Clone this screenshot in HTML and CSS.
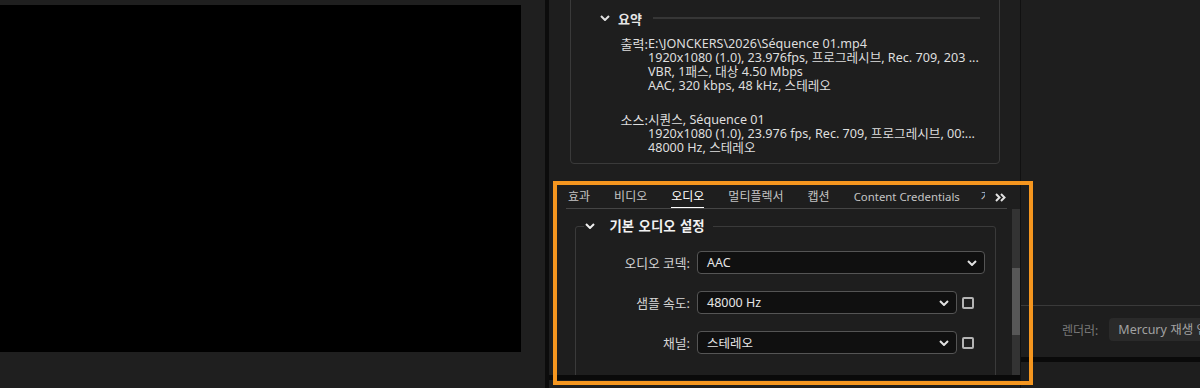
FILE: index.html
```html
<!DOCTYPE html>
<html lang="ko">
<head>
    <meta charset="UTF-8">
    <title>내보내기 설정</title>
    <link rel="stylesheet" href="styles.css">
</head>
<body>
<div class="app">
    <section class="monitor">
        <div class="preview"></div>
    </section>
    <div class="split"></div>

    <section class="export">
        <div class="summary">
            <div class="group-head">
                <svg class="chev" width="10" height="6" viewBox="0 0 10 6"><path d="M1 1 L5 5 L9 1"/></svg>
                <span class="group-title">요약</span>
                <span class="rule"></span>
            </div>
            <dl class="info">
                <dt>출력:</dt>
                <dd>E:\JONCKERS\2026\Séquence 01.mp4</dd>
                <dt></dt>
                <dd>1920x1080 (1.0), 23.976fps, 프로그레시브, Rec. 709, 203 ...</dd>
                <dt></dt>
                <dd>VBR, 1패스, 대상 4.50 Mbps</dd>
                <dt></dt>
                <dd>AAC, 320 kbps, 48 kHz, 스테레오</dd>
            </dl>
            <dl class="info source">
                <dt>소스:</dt>
                <dd>시퀀스, Séquence 01</dd>
                <dt></dt>
                <dd>1920x1080 (1.0), 23.976 fps, Rec. 709, 프로그레시브, 00:...</dd>
                <dt></dt>
                <dd>48000 Hz, 스테레오</dd>
            </dl>
        </div>

        <div class="tabs">
            <div class="tab-list">
                <span class="tab">효과</span>
                <span class="tab">비디오</span>
                <span class="tab active">오디오</span>
                <span class="tab">멀티플렉서</span>
                <span class="tab">캡션</span>
                <span class="tab latin">Content Credentials</span>
                <span class="tab">게시</span>
            </div>
            <span class="more">
                <svg width="11" height="9" viewBox="0 0 11 9"><path d="M1 1 L4.5 4.5 L1 8 M6 1 L9.5 4.5 L6 8"/></svg>
            </span>
        </div>

        <div class="tab-body">
            <div class="settings">
                <fieldset class="group">
                    <legend>
                        <svg class="chev" width="10" height="6" viewBox="0 0 10 6"><path d="M1 1 L5 5 L9 1"/></svg>
                        <span>기본 오디오 설정</span>
                    </legend>
                    <div class="fields">
                        <div class="field">
                            <label>오디오 코덱:</label>
                            <div class="select">
                                <span>AAC</span>
                                <svg width="10" height="6" viewBox="0 0 10 6"><path d="M1 1 L5 5 L9 1"/></svg>
                            </div>
                        </div>
                        <div class="field">
                            <label>샘플 속도:</label>
                            <div class="select narrow">
                                <span>48000 Hz</span>
                                <svg width="10" height="6" viewBox="0 0 10 6"><path d="M1 1 L5 5 L9 1"/></svg>
                            </div>
                            <span class="check"></span>
                        </div>
                        <div class="field">
                            <label>채널:</label>
                            <div class="select narrow">
                                <span>스테레오</span>
                                <svg width="10" height="6" viewBox="0 0 10 6"><path d="M1 1 L5 5 L9 1"/></svg>
                            </div>
                            <span class="check"></span>
                        </div>
                    </div>
                </fieldset>
            </div>
            <div class="scrollbar"><div class="thumb"></div></div>
        </div>
        <div class="panel-foot"></div>
    </section>

    <section class="render-side">
        <div class="render-top"></div>
        <div class="render-row">
            <span class="render-label">렌더러:</span>
            <div class="render-select">Mercury 재생 엔진 GPU 가속(CUDA)</div>
        </div>
        <div class="render-foot"></div>
    </section>
</div>

<div class="highlight"></div>
</body>
</html>
```

FILE: styles.css
```css
body {
    margin: 0;
    background: #1e1e1e;
    font-family: "Noto Sans", "Noto Sans CJK KR", sans-serif;
    font-size: 12px;
    color: #d4d4d4;
    overflow: hidden;
}

.app {
    display: flex;
    width: 1200px;
    height: 388px;
}

/* program monitor */
.monitor {
    flex: none;
    width: 545px;
    padding-top: 5px;
    box-sizing: border-box;
    background: #1f1f1f;
}
.preview {
    width: 521px;
    height: 347px;
    background: #000;
}
.split {
    flex: none;
    width: 4px;
    background: #0c0c0c;
}

/* export panel */
.export {
    flex: none;
    width: 471px;
    display: flex;
    flex-direction: column;
    background: #1e1e1e;
}

.summary {
    flex: none;
    width: 430px;
    height: 172px;
    margin: -8px 0 0 21px;
    padding-top: 16px;
    box-sizing: border-box;
    border: 1px solid #3a3a3a;
    border-radius: 4px;
}

.chev path,
.select path,
.more path {
    fill: none;
    stroke: #e2e2e2;
    stroke-width: 2;
}

.group-head {
    display: flex;
    align-items: center;
    height: 18px;
    padding: 0 19px 0 29px;
}
.group-head .chev { margin-right: 8px }
.group-title {
    font-size: 13px;
    font-weight: 600;
    color: #e6e6e6;
}
.rule {
    flex: 1;
    height: 2px;
    margin-left: 11px;
    background: #363636;
}

.info {
    display: grid;
    grid-template-columns: 31px 1fr;
    margin: 10px 0 0 46px;
    font-size: 12.6px;
    line-height: 14px;
    color: #dedede;
}
.info.source { margin-top: 20px }
.info dt {
    text-align: right;
    font-size: 13px;
    white-space: nowrap;
}
.info dd {
    margin: 0;
    white-space: nowrap;
}

/* tabs */
.tabs {
    flex: none;
    display: flex;
    width: 439px;
    height: 22px;
    margin: 22px 0 0 17px;
    padding-left: 2px;
    box-sizing: content-box;
    border-bottom: 1px solid #454545;
}
.tab-list {
    flex: none;
    width: 417px;
    display: flex;
    gap: 24px;
    overflow: hidden;
}
.tab {
    flex: none;
    line-height: 22px;
    color: #c4c4c4;
    white-space: nowrap;
}
.tab.latin {
    font-size: 11.4px;
    margin-right: -3px;
}
.tab.active {
    color: #fff;
    box-shadow: 0 1px 0 #fff, inset 0 -1px 0 #fff;
}
.more {
    flex: 1;
    display: flex;
    align-items: center;
    justify-content: flex-end;
    padding-right: 1px;
}

.tab-body {
    flex: none;
    display: flex;
    height: 166px;
}
.settings {
    flex: 1;
    min-width: 0;
    overflow: hidden;
}

.group {
    width: 421px;
    height: 220px;
    margin: 8px 0 0 26px;
    padding: 0;
    box-sizing: border-box;
    border: 1px solid #3a3a3a;
    border-radius: 3px;
    min-width: 0;
}
.group legend {
    margin-left: 8px;
    padding: 0 8px 0 1px;
    line-height: 18px;
    font-size: 13.4px;
    font-weight: 700;
    word-spacing: 1px;
    color: #f2f2f2;
}
.group legend .chev {
    margin-right: 10px;
    vertical-align: 2px;
}
.group legend .chev path { stroke: #f0f0f0 }

.fields {
    display: flex;
    flex-direction: column;
    gap: 17px;
    padding-top: 16px;
}
.field {
    display: flex;
    align-items: center;
    height: 23px;
}
.field label {
    flex: none;
    width: 114px;
    margin-right: 7px;
    text-align: right;
    color: #d6d6d6;
    font-size: 12.8px;
}

.select {
    flex: none;
    display: flex;
    align-items: center;
    justify-content: space-between;
    width: 288px;
    height: 23px;
    padding: 0 7px 0 9px;
    box-sizing: border-box;
    border: 1px solid #555;
    border-radius: 4px;
    background: #101010;
    color: #e6e6e6;
    font-size: 12.5px;
}
.select.narrow { width: 260px }

.check {
    flex: none;
    width: 12px;
    height: 12px;
    margin-left: 5px;
    box-sizing: border-box;
    border: 2px solid #b4b4b4;
    border-radius: 2px;
}

.scrollbar {
    flex: none;
    width: 8px;
    padding-top: 59px;
    box-sizing: border-box;
    background: #333;
}
.thumb {
    height: 67px;
    background: #575757;
}

.panel-foot {
    flex: none;
    height: 5px;
    background: #0a0a0a;
}

/* renderer side */
.render-side {
    flex: 1;
    min-width: 0;
    display: flex;
    flex-direction: column;
    border-left: 1px solid #111;
}
.render-top {
    flex: none;
    height: 305px;
}
.render-row {
    display: flex;
    align-items: center;
    padding: 12px 0 16px 41px;
    border-top: 1px solid #3a3a3a;
}
.render-label {
    flex: none;
    margin-right: 11px;
    color: #7a7a7a;
}
.render-select {
    flex: 1;
    min-width: 0;
    height: 23px;
    line-height: 23px;
    padding-left: 9px;
    border-radius: 4px 0 0 4px;
    background: #2a2a2a;
    color: #a2a2a2;
    font-size: 12.5px;
    white-space: nowrap;
    overflow: hidden;
}
.render-foot {
    flex: none;
    height: 5px;
    background: #0a0a0a;
}

/* annotation frame */
.highlight {
    position: absolute;
    left: 553px;
    top: 181px;
    width: 480px;
    height: 204px;
    box-sizing: border-box;
    border: 4px solid #f5961f;
    pointer-events: none;
}
```
